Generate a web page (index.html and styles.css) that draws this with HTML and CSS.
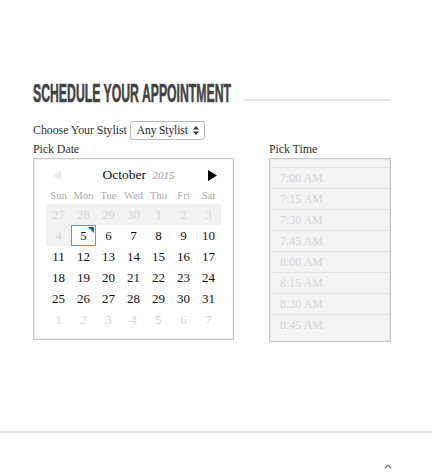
FILE: index.html
```html
<!DOCTYPE html>
<html>
<head>
<meta charset="utf-8">
<link rel="stylesheet" href="styles.css">
</head>
<body>
<div class="page">
  <div class="section">
    <div class="title">
      <div class="title-text"><span>SCHEDULE YOUR APPOINTMENT</span></div>
      <div class="title-line"></div>
    </div>
    <div class="stylist">
      <label class="label">Choose Your Stylist</label>
      <div class="select"><span class="sel-text">Any Stylist</span><span class="updown"><svg width="6" height="9" viewBox="0 0 6 9"><path d="M0 3.5L3 0L6 3.5Z M0 5.5L3 9L6 5.5Z" fill="#333"/></svg></span></div>
    </div>
    <div class="pickers">
      <div class="col-date">
        <div class="label">Pick Date</div>
        <div class="cal">
          <div class="cal-head">
            <svg class="arrow" width="8" height="11" viewBox="0 0 8 11"><path d="M8 0L0 5.5L8 11Z" fill="#ececec"/></svg>
            <div class="month">October <em>2015</em></div>
            <svg class="arrow" width="9" height="11" viewBox="0 0 9 11"><path d="M0 0L9 5.5L0 11Z" fill="#000"/></svg>
          </div>
          <div class="grid">
            <div class="dn">Sun</div><div class="dn">Mon</div><div class="dn">Tue</div><div class="dn">Wed</div><div class="dn">Thu</div><div class="dn">Fri</div><div class="dn">Sat</div>
            <div class="d off past">27</div><div class="d off past">28</div><div class="d off past">29</div><div class="d off past">30</div><div class="d off past">1</div><div class="d off past">2</div><div class="d off past">3</div>
            <div class="d off past">4</div><div class="d sel">5</div><div class="d">6</div><div class="d">7</div><div class="d">8</div><div class="d">9</div><div class="d">10</div>
            <div class="d">11</div><div class="d">12</div><div class="d">13</div><div class="d">14</div><div class="d">15</div><div class="d">16</div><div class="d">17</div>
            <div class="d">18</div><div class="d">19</div><div class="d">20</div><div class="d">21</div><div class="d">22</div><div class="d">23</div><div class="d">24</div>
            <div class="d">25</div><div class="d">26</div><div class="d">27</div><div class="d">28</div><div class="d">29</div><div class="d">30</div><div class="d">31</div>
            <div class="d off">1</div><div class="d off">2</div><div class="d off">3</div><div class="d off">4</div><div class="d off">5</div><div class="d off">6</div><div class="d off">7</div>
          </div>
        </div>
      </div>
      <div class="col-time">
        <div class="label">Pick Time</div>
        <div class="times">
          <div class="t-top"></div>
          <div class="t">7:00 AM</div>
          <div class="t">7:15 AM</div>
          <div class="t">7:30 AM</div>
          <div class="t">7:45 AM</div>
          <div class="t">8:00 AM</div>
          <div class="t">8:15 AM</div>
          <div class="t">8:30 AM</div>
          <div class="t">8:45 AM</div>
        </div>
      </div>
    </div>
  </div>
  <div class="footer">
    <div class="totop"><svg width="8" height="5" viewBox="0 0 8 5"><path d="M0.7 4.5L4 1.2L7.3 4.5" fill="none" stroke="#777" stroke-width="1.2"/></svg></div>
  </div>
</div>
</body>
</html>
```
FILE: styles.css
```css
* { box-sizing: border-box; }
html, body { margin: 0; padding: 0; background: #fff; }
body {
  font-family: "Liberation Serif", "DejaVu Serif", serif;
  font-size: 12px;
  color: #222;
  width: 432px;
  height: 472px;
  overflow: hidden;
}
.section {
  padding: 80px 41px 0 33px;
  height: 431px;
}
.title {
  display: flex;
  align-items: flex-end;
  height: 26px;
}
.title-text {
  width: 200px;
  flex: none;
  overflow: visible;
  white-space: nowrap;
  height: 26px;
}
.title-text span {
  display: inline-block;
  font-family: "Liberation Sans", sans-serif;
  font-weight: bold;
  font-size: 25px;
  line-height: 26px;
  color: #444;
  -webkit-text-stroke: 0.6px #444;
  transform: scaleX(0.49);
  transform-origin: left center;
}
.title-line {
  flex: 1;
  margin-left: 11px;
  margin-bottom: 5px;
  height: 2px;
  background: #e4e4e4;
}
.label {
  font-size: 12px;
  letter-spacing: -0.1px;
  color: #333;
  line-height: 16px;
}
.stylist {
  display: flex;
  align-items: center;
  gap: 3px;
  margin-top: 15px;
  height: 18px;
}
.select {
  height: 19px;
  width: 75px;
  flex: none;
  border: 1px solid #b9b9b9;
  border-radius: 3px;
  display: flex;
  align-items: center;
  justify-content: space-between;
  padding: 0 5px 0 6px;
  font-size: 11.5px;
  letter-spacing: -0.1px;
  color: #222;
  background: #fff;
  white-space: nowrap;
}
.sel-text { white-space: nowrap; }
.updown { display: flex; align-items: center; }
.pickers {
  display: flex;
  justify-content: space-between;
  margin-top: 2px;
}
.col-date { width: 201px; }
.col-time { width: 122px; }
.cal {
  margin-top: 1px;
  border: 1px solid #c8c8c8;
  box-shadow: inset 0 0 0 1px #f0f0f0;
  height: 182px;
  padding: 0 12px 0 12px;
}
.cal-head {
  height: 28px;
  display: flex;
  align-items: center;
  justify-content: space-between;
  padding: 4px 4px 0 7px;
}
.month {
  font-size: 13.5px;
  color: #111;
  margin-left: 8px;
}
.month em {
  font-size: 11px;
  color: #999;
  margin-left: 3px;
}
.grid {
  display: grid;
  grid-template-columns: repeat(7, 25px);
  grid-auto-rows: 21px;
  grid-template-rows: 17px;
}
.dn {
  text-align: center;
  font-size: 10.5px;
  color: #aaa;
  line-height: 17px;
}
.d {
  text-align: center;
  line-height: 21px;
  font-size: 13px;
  color: #111;
  position: relative;
}
.d.off { color: #d6d6d6; }
.d.past { background: #f2f2f2; }
.d.sel {
  border: 1px solid #4d9de0;
  line-height: 19px;
}
.d.sel::after {
  content: "";
  position: absolute;
  top: 1px;
  right: 1px;
  border-style: solid;
  border-width: 0 6px 6px 0;
  border-color: transparent #1f5fa8 transparent transparent;
}
.times {
  margin-top: 1px;
  border: 1px solid #c8c8c8;
  background: #f3f3f3;
  height: 184px;
  box-shadow: inset 0 0 0 1px #e8e8e8;
}
.t-top { height: 8px; }
.t {
  height: 21px;
  line-height: 21px;
  border-top: 1px solid #e2e2e2;
  padding-left: 10px;
  color: #d6d6d6;
  font-size: 12px;
}
.footer {
  border-top: 2px solid #e4e4e4;
  height: 41px;
  position: relative;
}
.totop {
  position: absolute;
  right: 40px;
  top: 31px;
  line-height: 0;
}
```
